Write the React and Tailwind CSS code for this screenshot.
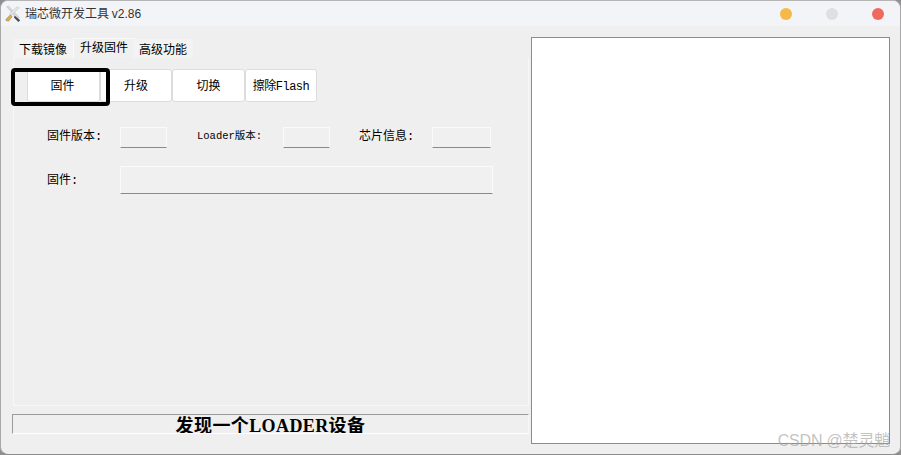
import { useState } from 'react';

const cjk = 'font-["Liberation_Mono","Noto_Sans_CJK_SC",monospace]';

const Field = ({ className }) => (
  <div className={`border border-[#fafafa] border-b-[#8a8a8a] bg-[#f0f0f0] ${className}`} />
);

const ToolIcon = () => (
  <svg width="18" height="18" viewBox="0 0 20 20" className="shrink-0">
    <path d="M3 2 L5 1 L17 14 L15 16 Z" fill="#d5d8dc" stroke="#b0b5ba" strokeWidth="0.5" />
    <path d="M14 2 L17 3 L8 12 L6 10 Z" fill="#e2e2e2" stroke="#bcbcbc" strokeWidth="0.5" />
    <path d="M7 11 L9 13 L5 18 L2 17 L3 15 Z" fill="#e0b13c" stroke="#6a6a6a" strokeWidth="0.5" />
    <path d="M12 12 L18 17 L16 19 L11 14 Z" fill="#4a4a4a" />
  </svg>
);

const Tab = ({ label, active, onClick, className = '' }) => (
  <button
    onClick={onClick}
    className={`text-[12px] leading-none text-black font-["Noto_Sans_CJK_SC",sans-serif] ${
      active
        ? 'h-[20px] w-[62px] pb-[3px] bg-[#f0f0f0] border border-b-0 border-[#f9f9f9]'
        : 'h-[19px] w-[60px] mt-[1px] pt-[1px] bg-[#f3f3f3]'
    } ${className}`}
  >
    {label}
  </button>
);

const ActionButton = ({ label, className = 'w-[73px]' }) => (
  <button className={`h-[33px] pt-[2px] rounded-[3px] border border-[#dcdcdc] bg-white text-[12px] text-black ${cjk} ${className}`}>
    {label}
  </button>
);

export default function App() {
  const [tab, setTab] = useState(1);

  return (
    <div className="w-[901px] h-[455px] overflow-hidden bg-[#8f8f8f]">
      <div className="relative w-full h-full flex flex-col rounded-[8px] border border-t-[#b5b5b5] border-x-[#a8a8a8] border-b-[#8c8c8c] bg-[#efefef] overflow-hidden">
        {/* Title bar */}
        <div className="h-[25px] shrink-0 flex items-center bg-[#f3f4f8] pl-[3px]">
          <ToolIcon />
          <span className='ml-[3px] -mt-[1px] text-[12px] text-[#333] font-["Noto_Sans_CJK_SC",sans-serif]'>
            瑞芯微开发工具 <span className='font-["Liberation_Sans",sans-serif]'>v2.86</span>
          </span>
          <div className="ml-auto flex items-center gap-[34px] pr-[16px]">
            <span className="w-[12px] h-[12px] rounded-full bg-[#f5b94a]" />
            <span className="w-[12px] h-[12px] rounded-full bg-[#dfdfdf]" />
            <span className="w-[12px] h-[12px] rounded-full bg-[#ee6a5f]" />
          </div>
        </div>

        {/* Body */}
        <div className="flex-1 flex pt-[11px] pl-[11px] pr-[10px] pb-[10px] gap-[2px] min-h-0">
          <div className="w-[517px] shrink-0 flex flex-col">
            <div className="flex pl-[1px] h-[20px] mt-[1px]">
              <Tab label="下载镜像" active={tab === 0} onClick={() => setTab(0)} />
              <Tab label="升级固件" active={tab === 1} onClick={() => setTab(1)} />
              <Tab label="高级功能" active={tab === 2} onClick={() => setTab(2)} className="-ml-[2px]" />
            </div>

            <div className="relative h-[348px] ml-[1px] border border-t-0 border-[#f7f7f7]">
              <div className="flex pl-[13px] pt-[11px]">
                <ActionButton label="固件" className="w-[73px] pr-[2px]" />
                <ActionButton label="升级" className="w-[72px]" />
                <ActionButton label="切换" />
                <ActionButton label="擦除Flash" className="w-[72px] text-[11px] tracking-[-0.5px]" />
              </div>
              {/* focus ring on the first button */}
              <div className="absolute left-[-3px] top-[10px] w-[99px] h-[38px] rounded-[4px] border-[4px] border-black" />

              <div className={`flex items-center mt-[25px] pl-[33px] text-[12px] text-black ${cjk}`}>
                <span className="w-[73px] -mt-[2px]">固件版本:</span>
                <Field className="w-[47px] h-[21px]" />
                <span className="ml-[30px] w-[86px] -mt-[2px] text-[10.5px]">Loader版本:</span>
                <Field className="w-[47px] h-[21px]" />
                <span className="ml-[29px] w-[73px] -mt-[2px]">芯片信息:</span>
                <Field className="w-[59px] h-[21px]" />
              </div>
              <div className={`flex items-center mt-[18px] pl-[33px] text-[12px] text-black ${cjk}`}>
                <span className="w-[73px] mt-[2px]">固件:</span>
                <Field className="w-[373px] h-[28px]" />
              </div>
            </div>

            <div className='h-[20px] mt-[8px] border-t border-x border-t-[#9a9a9a] border-l-[#9a9a9a] border-r-[#f7f7f7] border-b border-b-white overflow-hidden text-center text-[18px] tracking-[0.4px] leading-[22px] font-bold text-black font-["Liberation_Serif","Noto_Sans_CJK_SC",serif]'>
              发现一个LOADER设备
            </div>
          </div>

          {/* Log panel */}
          <div className="relative flex-1 bg-white border border-[#8a8a9a]" />
        </div>

        <span className='absolute right-[10px] bottom-[2px] text-[16px] leading-[22px] tracking-[-0.2px] text-[#a8a8a8]/70 font-["Liberation_Sans","Noto_Sans_CJK_SC",sans-serif]'>
          CSDN @楚灵魈
        </span>
      </div>
    </div>
  );
}
